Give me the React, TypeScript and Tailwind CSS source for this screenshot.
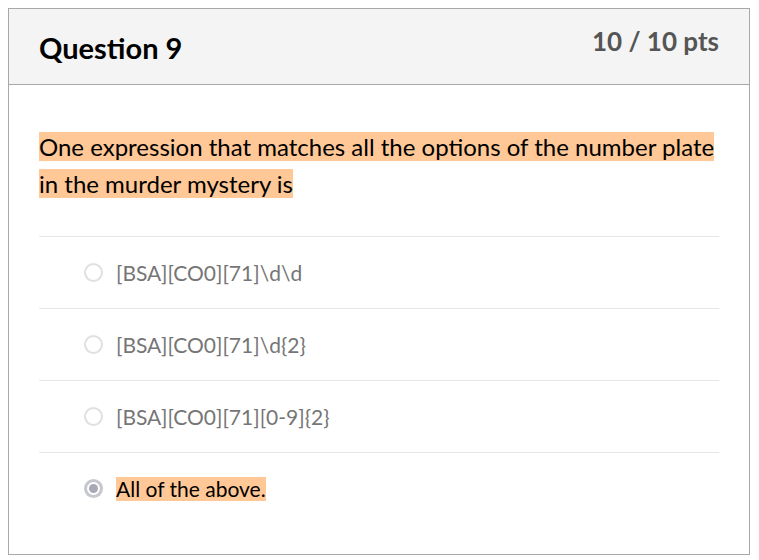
import React from 'react';

const options = [
  { id: 'a', label: '[BSA][CO0][71]\\d\\d', selected: false },
  { id: 'b', label: '[BSA][CO0][71]\\d{2}', selected: false },
  { id: 'c', label: '[BSA][CO0][71][0-9]{2}', selected: false },
  { id: 'd', label: 'All of the above.', selected: true },
];

const Radio: React.FC<{ checked: boolean }> = ({ checked }) =>
  checked ? (
    <span className="w-[19px] h-[19px] rounded-full bg-[#c7c7cf] flex items-center justify-center shrink-0">
      <span className="w-[13px] h-[13px] rounded-full bg-white flex items-center justify-center">
        <span className="w-[9px] h-[9px] rounded-full bg-[#a9a9b6]" />
      </span>
    </span>
  ) : (
    <span className="w-[19px] h-[19px] rounded-full border-[2.5px] border-[#e0e0e2] bg-white shrink-0" />
  );

export default function App() {
  return (
    <div className="pt-2 pl-2 pr-[9px] pb-2 bg-white font-['Lato','Noto_Sans',sans-serif]">
      <div className="border border-[#a8a8a8] bg-white">
        <div className="flex items-start justify-between bg-[#f4f4f4] border-b border-[#a8a8a8] h-[76px] pl-[30px] pr-[30px]">
          <h2 className="font-bold text-[29px] text-black mt-[21px] leading-[36px]">Question 9</h2>
          <div className="font-bold text-[26px] text-[#555555] mt-[17px] leading-[30px]">10 / 10 pts</div>
        </div>
        <div className="pl-[30px] pr-[30px] pt-[43px] pb-[30px]">
          <p className="text-[24px] leading-[37px] text-black">
            <span className="bg-[#ffc896]">
              One expression that matches all the options of the number plate in the murder mystery is
            </span>
          </p>
          <div className="mt-[34px]">
            {options.map((o) => (
              <div key={o.id} className="h-[72px] border-t border-[#e6e6e6] flex items-center pl-[45px] gap-[13px]">
                <Radio checked={o.selected} />
                <span
                  className={
                    o.selected
                      ? 'text-[21px] text-black bg-[#ffc896] leading-[24px]'
                      : 'text-[21px] text-[#767676] leading-[24px]'
                  }
                >
                  {o.label}
                </span>
              </div>
            ))}
          </div>
        </div>
      </div>
    </div>
  );
}
